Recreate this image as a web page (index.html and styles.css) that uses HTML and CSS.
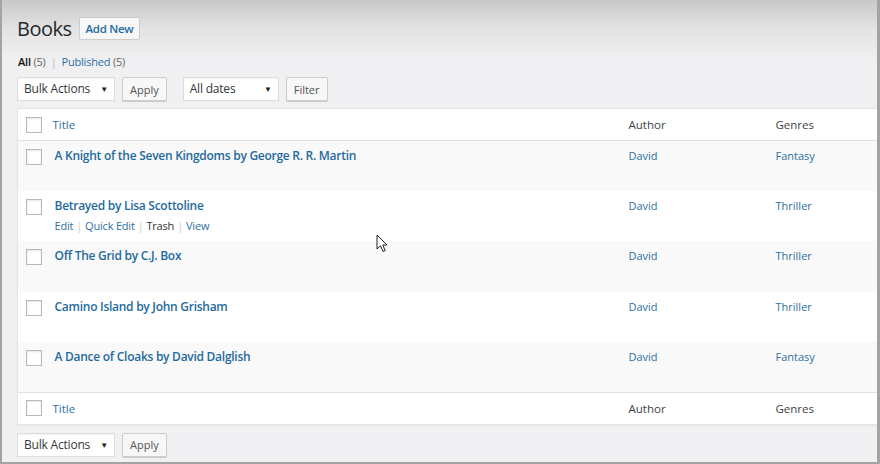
FILE: index.html
```html
<!DOCTYPE html>
<html lang="en">
<head>
    <meta charset="UTF-8">
    <title>Books</title>
    <link rel="stylesheet" href="styles.css">
</head>
<body>
    <div class="frame">
        <div class="wrap">
            <div class="page-head">
                <h1>Books</h1>
                <a class="add-new" href="#">Add New</a>
            </div>

            <ul class="views">
                <li><span class="current">All</span> <span class="count">(5)</span></li>
                <li class="sep">|</li>
                <li><a href="#">Published</a> <span class="count">(5)</span></li>
            </ul>

            <div class="tablenav">
                <div class="select wide">Bulk Actions <span class="arrow">▼</span></div>
                <button class="button">Apply</button>
                <div class="select dates">All dates <span class="arrow">▼</span></div>
                <button class="button">Filter</button>
            </div>

            <table class="list">
                <colgroup>
                    <col class="col-cb">
                    <col class="col-title">
                    <col class="col-author">
                    <col>
                </colgroup>
                <thead>
                    <tr>
                        <th class="check"><span class="box"></span></th>
                        <th><a href="#">Title</a></th>
                        <th>Author</th>
                        <th>Genres</th>
                    </tr>
                </thead>
                <tbody>
                    <tr class="alt">
                        <td class="check"><span class="box"></span></td>
                        <td><a class="row-title" href="#">A Knight of the Seven Kingdoms by George R. R. Martin</a></td>
                        <td><a href="#">David</a></td>
                        <td><a href="#">Fantasy</a></td>
                    </tr>
                    <tr>
                        <td class="check"><span class="box"></span></td>
                        <td>
                            <a class="row-title" href="#">Betrayed by Lisa Scottoline</a>
                            <div class="row-actions">
                                <a href="#">Edit</a><span class="bar">|</span><a href="#">Quick Edit</a><span class="bar">|</span><a class="trash" href="#">Trash</a><span class="bar">|</span><a href="#">View</a>
                            </div>
                        </td>
                        <td><a href="#">David</a></td>
                        <td><a href="#">Thriller</a></td>
                    </tr>
                    <tr class="alt">
                        <td class="check"><span class="box"></span></td>
                        <td><a class="row-title" href="#">Off The Grid by C.J. Box</a></td>
                        <td><a href="#">David</a></td>
                        <td><a href="#">Thriller</a></td>
                    </tr>
                    <tr>
                        <td class="check"><span class="box"></span></td>
                        <td><a class="row-title" href="#">Camino Island by John Grisham</a></td>
                        <td><a href="#">David</a></td>
                        <td><a href="#">Thriller</a></td>
                    </tr>
                    <tr class="alt">
                        <td class="check"><span class="box"></span></td>
                        <td><a class="row-title" href="#">A Dance of Cloaks by David Dalglish</a></td>
                        <td><a href="#">David</a></td>
                        <td><a href="#">Fantasy</a></td>
                    </tr>
                </tbody>
                <tfoot>
                    <tr>
                        <th class="check"><span class="box"></span></th>
                        <th><a href="#">Title</a></th>
                        <th>Author</th>
                        <th>Genres</th>
                    </tr>
                </tfoot>
            </table>

            <div class="tablenav bottom">
                <div class="select wide">Bulk Actions <span class="arrow">▼</span></div>
                <button class="button">Apply</button>
            </div>
        </div>

        <svg class="cursor" width="13" height="20" viewBox="0 0 13 20">
            <path d="M1 1 L1 15 L4.5 11.8 L7 17.5 L9.2 16.6 L6.8 11 L11 11 Z" fill="#fff" stroke="#222" stroke-width="1" stroke-linejoin="round"/>
        </svg>
    </div>
</body>
</html>
```

FILE: styles.css
```css
* {
    box-sizing: border-box;
}
body {
    margin: 0;
    font-family: "Open Sans", "Noto Sans", sans-serif;
    font-size: 12px;
    color: #444;
}
a {
    color: #2d6fa3;
    text-decoration: none;
}
.frame {
    position: relative;
    width: 880px;
    height: 464px;
    overflow: hidden;
    border-left: 2px solid #a3a3a3;
    border-right: 3px solid #a3a3a3;
    border-bottom: 2px solid #a3a3a3;
    background: linear-gradient(#c8c8c8 0, #e4e4e4 30px, #f0eff1 60px);
}
.wrap {
    padding: 17px 0 0 15px;
}
.page-head {
    display: flex;
    align-items: center;
    gap: 7px;
    height: 23px;
}
h1 {
    margin: 0;
    font-size: 20px;
    font-weight: 400;
    color: #23282d;
    letter-spacing: -0.5px;
}
.add-new {
    display: block;
    height: 23px;
    line-height: 21px;
    padding: 0 6px;
    border: 1px solid #ccc;
    border-radius: 2px;
    background: #f7f7f7;
    font-weight: 600;
    font-size: 11.5px;
    letter-spacing: -0.3px;
    color: #1f6ba0;
}
.views {
    display: flex;
    gap: 5px;
    list-style: none;
    margin: 15px 0 0 1px;
    padding: 0;
    line-height: 14px;
    font-size: 11px;
    letter-spacing: -0.2px;
}
.views .current {
    font-weight: 600;
    color: #111;
}
.views .count {
    color: #666;
}
.views .sep {
    color: #bbb;
}
.tablenav {
    display: flex;
    align-items: center;
    gap: 7px;
    margin-top: 8px;
    height: 24px;
}
.tablenav.bottom {
    margin-top: 8px;
}
.select {
    position: relative;
    height: 24px;
    line-height: 22px;
    padding: 0 6px;
    border: 1px solid #ddd;
    background: #fff;
    font-size: 12px;
    letter-spacing: -0.2px;
    color: #32373c;
    box-shadow: inset 0 1px 2px rgba(0, 0, 0, 0.05);
}
.select.wide {
    width: 98px;
}
.select.dates {
    width: 96px;
    margin-left: 9px;
}
.select .arrow {
    position: absolute;
    right: 6px;
    top: 0;
    font-size: 8px;
    color: #222;
}
.button {
    height: 24px;
    padding: 0 7px;
    border: 1px solid #ccc;
    border-radius: 2px;
    background: #f7f7f7;
    box-shadow: 0 1px 0 #ccc;
    font-family: inherit;
    font-size: 11px;
    color: #555;
}
.list {
    width: 863px;
    margin-top: 7px;
    border-collapse: collapse;
    table-layout: fixed;
    background: #fff;
    border: 1px solid #e5e5e5;
    box-shadow: 0 1px 1px rgba(0, 0, 0, 0.04);
}
.col-cb {
    width: 25px;
}
.col-title {
    width: 576px;
}
.col-author {
    width: 147px;
}
th {
    height: 32px;
    padding: 0 10px;
    text-align: left;
    font-weight: 400;
    font-size: 11.5px;
    color: #3c4146;
    vertical-align: middle;
}
thead tr {
    border-bottom: 1px solid #e1e1e1;
}
tfoot tr {
    border-top: 1px solid #e1e1e1;
}
td {
    height: 50.4px;
    padding: 6px 10px 0;
    vertical-align: top;
    line-height: 18px;
    font-size: 11px;
}
tr.alt td {
    background: #f9f9f9;
}
th.check,
td.check {
    padding: 0 0 0 8px;
}
td.check {
    padding-top: 8px;
}
.box {
    display: block;
    width: 16px;
    height: 16px;
    border: 1px solid #b4b9be;
    background: #fff;
    box-shadow: inset 0 1px 2px rgba(0, 0, 0, 0.1);
}
.row-title {
    display: inline-block;
    margin-left: 2px;
    font-weight: 600;
    font-size: 12px;
    letter-spacing: -0.27px;
    color: #1f6aa0;
}
.row-actions {
    margin: 2px 0 0 2px;
    font-size: 11px;
    letter-spacing: -0.2px;
}
.row-actions .bar {
    margin: 0 3px;
    color: #ccc;
}
.row-actions .trash {
    color: #333;
}
.cursor {
    position: absolute;
    left: 374px;
    top: 234px;
}
```
